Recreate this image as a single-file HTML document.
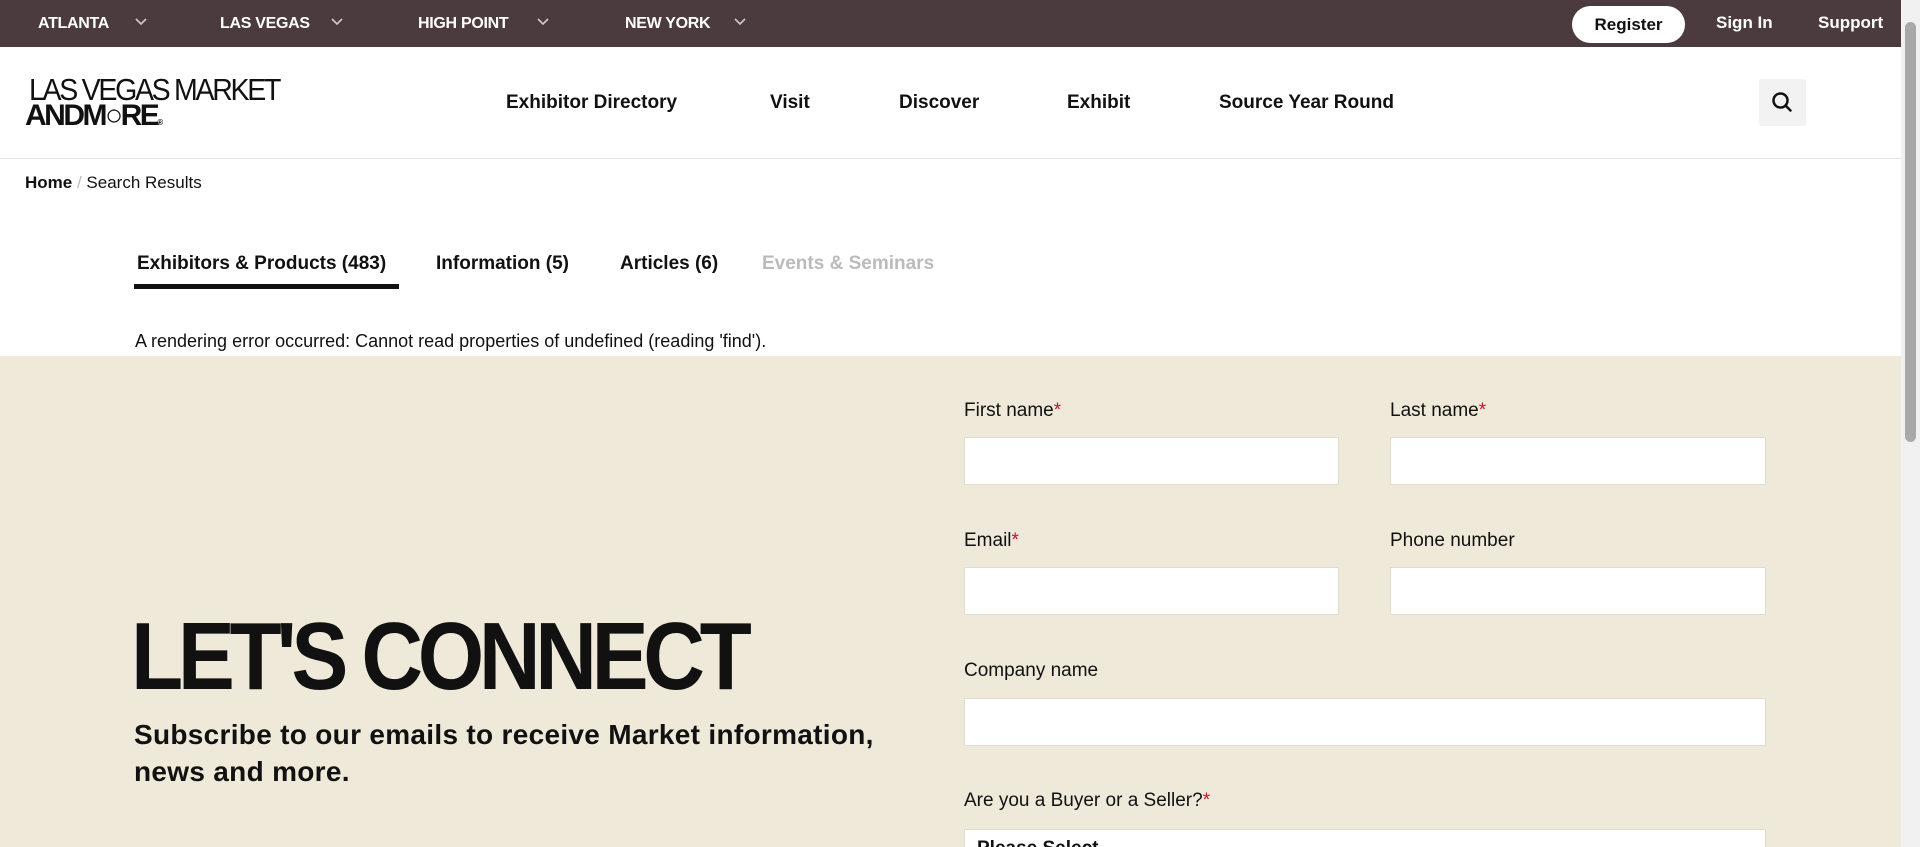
<!DOCTYPE html>
<html><head><meta charset="utf-8"><style>
*{box-sizing:border-box;margin:0;padding:0}
html,body{width:1920px;height:847px;overflow:hidden}
body{font-family:"Liberation Sans",sans-serif;color:#111;background:#fff;position:relative}
.top{position:absolute;left:0;top:0;width:1901px;height:47px;background:#4b3b3f}
.top .c{position:absolute;top:15px;color:#fff;font-weight:bold;font-size:16px;letter-spacing:-0.3px}
.top .c svg{position:absolute;top:2px}
.reg{position:absolute;left:1572px;top:6px;width:113px;height:37px;border-radius:19px;background:#fff;color:#111;font-weight:bold;font-size:17px;text-align:center;line-height:37px}
.tl{position:absolute;top:13px;color:#fff;font-weight:bold;font-size:17px}
.hdr{position:absolute;left:0;top:47px;width:1901px;height:112px;border-bottom:1px solid #e6e6e6}
.nav{position:absolute;top:45px;font-weight:bold;font-size:19px}
.srch{position:absolute;left:1759px;top:32px;width:47px;height:47px;background:#f2f2f2;border-radius:3px}
.abs{position:absolute}
.beige{position:absolute;left:0;top:356px;width:1901px;height:491px;background:#efe9d9;overflow:hidden}
.lbl{position:absolute;font-size:19px;color:#111}
.lbl b{color:#c8102e;font-weight:normal}
.inp{position:absolute;height:48px;background:#fff;border:1px solid #e0dccf}
.sb{position:absolute;left:1901px;top:0;width:19px;height:847px;background:#f1f1f1}
</style></head><body>
<div class="top">
 <div class="c" style="left:38px">ATLANTA<svg style="left:96px" width="14" height="10" viewBox="0 0 14 10"><path d="M2 2l5 5 5-5" stroke="#ccc" stroke-width="1.6" fill="none"/></svg></div>
 <div class="c" style="left:220px">LAS VEGAS<svg style="left:110px" width="14" height="10" viewBox="0 0 14 10"><path d="M2 2l5 5 5-5" stroke="#ccc" stroke-width="1.6" fill="none"/></svg></div>
 <div class="c" style="left:418px">HIGH POINT<svg style="left:118px" width="14" height="10" viewBox="0 0 14 10"><path d="M2 2l5 5 5-5" stroke="#ccc" stroke-width="1.6" fill="none"/></svg></div>
 <div class="c" style="left:625px">NEW YORK<svg style="left:108px" width="14" height="10" viewBox="0 0 14 10"><path d="M2 2l5 5 5-5" stroke="#ccc" stroke-width="1.6" fill="none"/></svg></div>
 <div class="reg">Register</div>
 <div class="tl" style="left:1716px">Sign In</div>
 <div class="tl" style="left:1818px">Support</div>
</div>
<div class="hdr">
 <div class="abs" style="left:29px;top:30px;font-size:31px;letter-spacing:-2.5px;line-height:26px;transform:scaleX(0.92);transform-origin:left">LAS VEGAS MARKET</div>
 <div class="abs" style="left:25px;top:56px;font-size:30px;font-weight:900;letter-spacing:-2.5px;line-height:26px">ANDM&#9675;RE<span style="font-size:8px">®</span></div>
 <div class="nav" style="left:506px">Exhibitor Directory</div>
 <div class="nav" style="left:770px">Visit</div>
 <div class="nav" style="left:899px">Discover</div>
 <div class="nav" style="left:1067px">Exhibit</div>
 <div class="nav" style="left:1219px">Source Year Round</div>
 <div class="srch"><svg width="47" height="47" viewBox="0 0 47 47"><circle cx="21.5" cy="21.5" r="7" stroke="#111" stroke-width="2.5" fill="none"/><path d="M26.5 26.5l5 5" stroke="#111" stroke-width="2.5" stroke-linecap="round"/></svg></div>
</div>
<div class="abs" style="left:25px;top:173px;font-size:17px"><b>Home</b> <span style="color:#bbb">/</span> Search Results</div>
<div class="abs" style="left:137px;top:253px;font-size:19px;font-weight:bold">Exhibitors &amp; Products (483)</div>
<div class="abs" style="left:134px;top:284px;width:265px;height:5px;background:#111"></div>
<div class="abs" style="left:436px;top:253px;font-size:19px;font-weight:bold">Information (5)</div>
<div class="abs" style="left:620px;top:253px;font-size:19px;font-weight:bold">Articles (6)</div>
<div class="abs" style="left:762px;top:253px;font-size:19px;font-weight:bold;color:#bbb">Events &amp; Seminars</div>
<div class="abs" style="left:135px;top:331px;font-size:18px">A rendering error occurred: Cannot read properties of undefined (reading 'find').</div>
<div class="beige">
 <div class="abs" style="left:131px;top:256px;font-size:96px;font-weight:900;letter-spacing:-6px;line-height:90px;transform:scaleX(0.89);transform-origin:left">LET'S CONNECT</div>
 <div class="abs" style="left:134px;top:360px;width:770px;font-size:28px;font-weight:900;line-height:37px;letter-spacing:0.3px">Subscribe to our emails to receive Market information, news and more.</div>
 <div class="lbl" style="left:964px;top:44px">First name<b>*</b></div>
 <div class="lbl" style="left:1390px;top:44px">Last name<b>*</b></div>
 <div class="inp" style="left:964px;top:81px;width:375px"></div>
 <div class="inp" style="left:1390px;top:81px;width:376px"></div>
 <div class="lbl" style="left:964px;top:174px">Email<b>*</b></div>
 <div class="lbl" style="left:1390px;top:174px">Phone number</div>
 <div class="inp" style="left:964px;top:211px;width:375px"></div>
 <div class="inp" style="left:1390px;top:211px;width:376px"></div>
 <div class="lbl" style="left:964px;top:304px">Company name</div>
 <div class="inp" style="left:964px;top:342px;width:802px"></div>
 <div class="lbl" style="left:964px;top:434px">Are you a Buyer or a Seller?<b>*</b></div>
 <div class="inp" style="left:964px;top:473px;width:802px;padding:8px 12px;font-size:19px;font-weight:bold">Please Select</div>
</div>
<div class="sb"><div style="position:absolute;left:4px;top:22px;width:11px;height:420px;background:#a8a8a8;border-radius:6px"></div></div>
</body></html>
